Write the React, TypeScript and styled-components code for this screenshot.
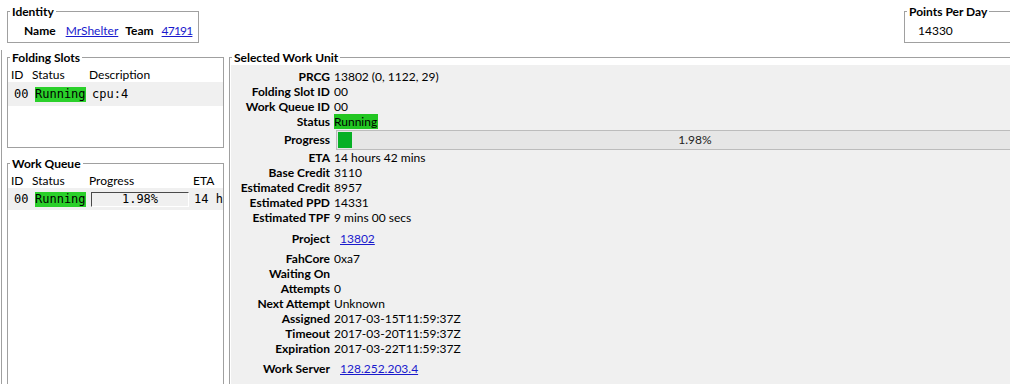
import React from "react";
import styled, { createGlobalStyle } from "styled-components";

const GlobalStyle = createGlobalStyle`
  html, body {
    margin: 0;
    padding: 0;
    overflow: hidden;
    background: #ffffff;
  }
  body {
    font-family: Lato, "Open Sans", sans-serif;
    font-size: 12px;
    color: #000000;
  }
`;

const Page = styled.div`
  width: 1060px;
  height: 392px;
  display: flex;
  flex-direction: column;
  background: #ffffff;
`;

const TopBar = styled.div`
  display: flex;
  justify-content: space-between;
  padding: 4px 7px 0;
`;

const GroupBox = styled.fieldset<{ $width?: number; $grow?: boolean }>`
  margin: 0;
  padding: 0;
  min-width: 0;
  border: 1px solid #a0a0a0;
  box-sizing: border-box;
  overflow: hidden;
  display: flex;
  flex-direction: column;
  ${(p) => (p.$width ? `width: ${p.$width}px;` : "")}
  ${(p) => (p.$grow ? "flex: 1;" : "")}
`;

const Legend = styled.legend`
  margin-left: 2px;
  padding: 0 2px;
  font-weight: bold;
  line-height: 15px;
`;

const IdentityRow = styled.div`
  display: flex;
  align-items: center;
  height: 23px;
  padding-left: 16px;
  white-space: nowrap;
`;

const Bold = styled.span<{ $gap?: number }>`
  font-weight: bold;
  margin-left: ${(p) => p.$gap ?? 0}px;
`;

const Link = styled.a<{ $indent?: number; $tight?: boolean }>`
  color: #1a1acd;
  text-decoration: underline;
  cursor: pointer;
  margin-left: ${(p) => p.$indent ?? 0}px;
  letter-spacing: ${(p) => (p.$tight ? "-0.8px" : "normal")};
`;

const PpdRow = styled.div`
  display: flex;
  align-items: center;
  height: 23px;
  padding-left: 13px;
`;

const Main = styled.div`
  flex: 1;
  display: flex;
  margin-top: 7px;
`;

const LeftPane = styled.div`
  width: 222px;
  margin-left: 1px;
  padding-left: 5px;
  box-sizing: border-box;
  border-left: 1px solid #a0a0a0;
  display: flex;
  flex-direction: column;
  gap: 8px;
`;

const SlotsBox = styled(GroupBox)`
  height: 98px;
  width: 217px;
`;

const QueueBox = styled(GroupBox)`
  flex: 1;
  width: 217px;
`;

const Table = styled.div<{ $cols: string }>`
  display: grid;
  grid-template-columns: ${(p) => p.$cols};
  margin-top: 2px;
  white-space: nowrap;
`;

const HeadCell = styled.div<{ $pad: number }>`
  height: 15px;
  line-height: 15px;
  padding-left: ${(p) => p.$pad}px;
`;

const DataCell = styled.div<{ $pad: number; $h: number }>`
  height: ${(p) => p.$h}px;
  display: flex;
  align-items: center;
  padding-left: ${(p) => p.$pad}px;
  background: #f0f0f0;
  font-family: "DejaVu Sans Mono", "Liberation Mono", monospace;
  font-size: 12px;
  overflow: hidden;
`;

const RunningCell = styled.span`
  background: #2ad02a;
  line-height: 15px;
`;

const SunkenBar = styled.div`
  width: 98px;
  height: 15px;
  box-sizing: border-box;
  border-top: 1px solid #4a4a4a;
  border-left: 1px solid #4a4a4a;
  border-right: 1px solid #ffffff;
  border-bottom: 1px solid #ffffff;
  display: flex;
  align-items: center;
  justify-content: center;
`;

const WorkUnitBox = styled(GroupBox)`
  flex: 1;
  margin-left: 6px;
`;

const DetailPanel = styled.div`
  flex: 1;
  margin: -1px 1px 0 1px;
  padding-top: 5px;
  background: #f0f0f0;
  display: flex;
  flex-direction: column;
`;

const Field = styled.div<{ $h?: number }>`
  display: grid;
  grid-template-columns: 99px 1fr;
  column-gap: 4px;
  align-items: center;
  height: ${(p) => p.$h ?? 15}px;
  white-space: nowrap;
`;

const Label = styled.div`
  justify-self: end;
  font-weight: bold;
  line-height: 15px;
`;

const Value = styled.div`
  line-height: 15px;
`;

const StatusValue = styled.span`
  background: #22c622;
  padding-right: 1px;
`;

const ProgressBar = styled.div`
  width: 718px;
  height: 20px;
  margin: 1px 0 0 2px;
  box-sizing: border-box;
  border: 1px solid #bcbcbc;
  background: #e6e6e6;
  padding: 1px;
  display: grid;
`;

const ProgressFill = styled.div`
  grid-area: 1 / 1;
  background: #06b025;
  height: 100%;
`;

const ProgressText = styled.div`
  grid-area: 1 / 1;
  text-align: center;
  line-height: 16px;
  color: #222222;
`;

const progress = 1.98;

type Row = { label: string; value?: React.ReactNode; h?: number };

const rows: Row[] = [
  { label: "PRCG", value: "13802 (0, 1122, 29)" },
  { label: "Folding Slot ID", value: "00" },
  { label: "Work Queue ID", value: "00" },
  { label: "Status", value: <StatusValue>Running</StatusValue> },
  {
    label: "Progress",
    h: 21,
    value: (
      <ProgressBar>
        <ProgressFill style={{ width: `${progress}%` }} />
        <ProgressText>{progress.toFixed(2)}%</ProgressText>
      </ProgressBar>
    ),
  },
  { label: "ETA", value: "14 hours 42 mins" },
  { label: "Base Credit", value: "3110" },
  { label: "Estimated Credit", value: "8957" },
  { label: "Estimated PPD", value: "14331" },
  { label: "Estimated TPF", value: "9 mins 00 secs" },
  { label: "Project", h: 26, value: <Link $indent={6}>13802</Link> },
  { label: "FahCore", value: "0xa7" },
  { label: "Waiting On", value: "" },
  { label: "Attempts", value: "0" },
  { label: "Next Attempt", value: "Unknown" },
  { label: "Assigned", value: "2017-03-15T11:59:37Z" },
  { label: "Timeout", value: "2017-03-20T11:59:37Z" },
  { label: "Expiration", value: "2017-03-22T11:59:37Z" },
  { label: "Work Server", h: 24, value: <Link $indent={6}>128.252.203.4</Link> },
];

const App: React.FC = () => {
  return (
    <Page>
      <GlobalStyle />
      <TopBar>
        <GroupBox $width={192}>
          <Legend>Identity</Legend>
          <IdentityRow>
            <Bold>Name</Bold>
            <Link $indent={10}>MrShelter</Link>
            <Bold $gap={7}>Team</Bold>
            <Link $indent={8} $tight>
              47191
            </Link>
          </IdentityRow>
        </GroupBox>
        <GroupBox $width={149}>
          <Legend>Points Per Day</Legend>
          <PpdRow>14330</PpdRow>
        </GroupBox>
      </TopBar>

      <Main>
        <LeftPane>
          <SlotsBox>
            <Legend>Folding Slots</Legend>
            <Table $cols="22px 57px 1fr">
              <HeadCell $pad={3}>ID</HeadCell>
              <HeadCell $pad={2}>Status</HeadCell>
              <HeadCell $pad={2}>Description</HeadCell>
              <DataCell $pad={6} $h={24}>00</DataCell>
              <DataCell $pad={5} $h={24}>
                <RunningCell>Running</RunningCell>
              </DataCell>
              <DataCell $pad={5} $h={24}>cpu:4</DataCell>
            </Table>
          </SlotsBox>

          <QueueBox>
            <Legend>Work Queue</Legend>
            <Table $cols="22px 57px 104px 1fr">
              <HeadCell $pad={3}>ID</HeadCell>
              <HeadCell $pad={2}>Status</HeadCell>
              <HeadCell $pad={2}>Progress</HeadCell>
              <HeadCell $pad={2}>ETA</HeadCell>
              <DataCell $pad={6} $h={22}>00</DataCell>
              <DataCell $pad={5} $h={22}>
                <RunningCell>Running</RunningCell>
              </DataCell>
              <DataCell $pad={4} $h={22}>
                <SunkenBar>1.98%</SunkenBar>
              </DataCell>
              <DataCell $pad={3} $h={22}>14 hours 42 mins</DataCell>
            </Table>
          </QueueBox>
        </LeftPane>

        <WorkUnitBox>
          <Legend>Selected Work Unit</Legend>
          <DetailPanel>
            {rows.map((r) => (
              <Field key={r.label} $h={r.h}>
                <Label>{r.label}</Label>
                <Value>{r.value}</Value>
              </Field>
            ))}
          </DetailPanel>
        </WorkUnitBox>
      </Main>
    </Page>
  );
};

export default App;
